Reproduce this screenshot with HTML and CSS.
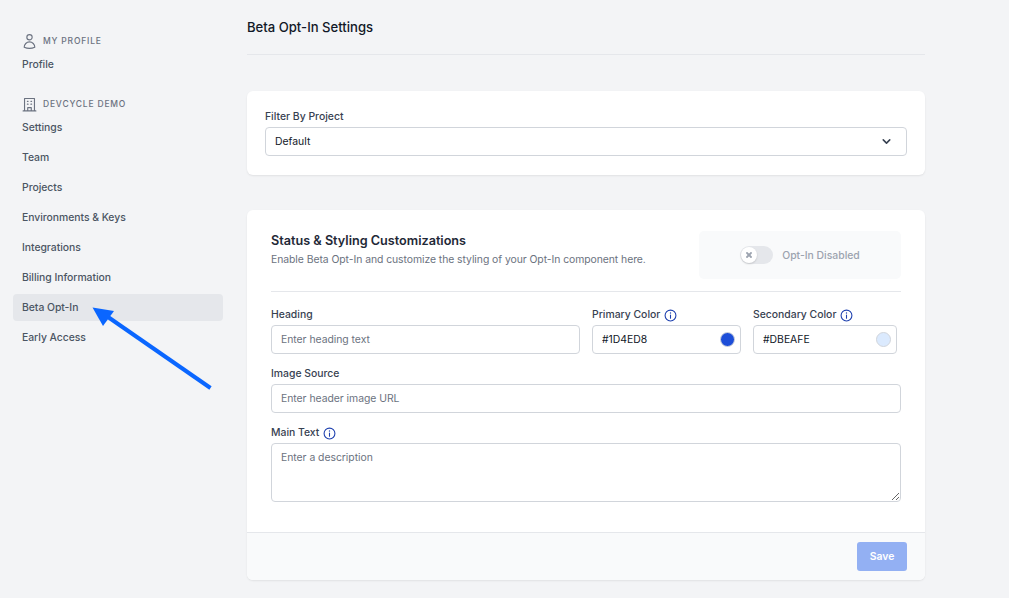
FILE: index.html
```html
<!DOCTYPE html>
<html>
  <head>
    <meta charset="UTF-8" />
    <title>Beta Opt-In Settings</title>
    <link rel="stylesheet" href="styles.css">
  </head>
  <body>
    <div class="page">
      <nav class="sidebar">
        <div class="nav-head">
          <svg class="nav-icon" viewBox="0 0 24 24" fill="none" stroke="#6b7280" stroke-width="1.6" stroke-linecap="round" stroke-linejoin="round"><path d="M15.75 6a3.75 3.75 0 1 1-7.5 0 3.75 3.75 0 0 1 7.5 0Z"/><path d="M4.5 20.1a7.5 7.5 0 0 1 15 0A17.9 17.9 0 0 1 12 21.75c-2.7 0-5.2-.6-7.5-1.65Z"/></svg>
          <span>MY PROFILE</span>
        </div>
        <a class="nav-item">Profile</a>
        <div class="nav-head nav-head-second">
          <svg class="nav-icon" viewBox="0 0 24 24" fill="none" stroke="#6b7280" stroke-width="1.6" stroke-linecap="round" stroke-linejoin="round"><path d="M3 21h18M5 21V3.500h14V21M9.500 21v-4.500h5V21M9 7.500h1M14 7.500h1M9 11.500h1M14 11.500h1"/></svg>
          <span>DEVCYCLE DEMO</span>
        </div>
        <div class="nav-list">
          <a class="nav-item">Settings</a>
          <a class="nav-item">Team</a>
          <a class="nav-item">Projects</a>
          <a class="nav-item">Environments &amp; Keys</a>
          <a class="nav-item">Integrations</a>
          <a class="nav-item">Billing Information</a>
          <a class="nav-item active">Beta Opt-In</a>
          <a class="nav-item">Early Access</a>
        </div>
      </nav>

      <main class="content">
        <h1 class="page-title">Beta Opt-In Settings</h1>

        <section class="card filter-card">
          <label class="field-label">Filter By Project</label>
          <div class="select-wrap">
            <select class="input select">
              <option>Default</option>
            </select>
            <svg class="chevron" viewBox="0 0 20 20" fill="none" stroke="#374151" stroke-width="2.4" stroke-linecap="round" stroke-linejoin="round"><path d="M5 7.500l5 5 5-5"/></svg>
          </div>
        </section>

        <section class="card status-card">
          <div class="card-body">
            <div class="status-head">
              <div>
                <h2 class="card-title">Status &amp; Styling Customizations</h2>
                <p class="card-sub">Enable Beta Opt-In and customize the styling of your Opt-In component here.</p>
              </div>
              <div class="toggle-box">
                <span class="toggle">
                  <span class="knob">
                    <svg viewBox="0 0 10 10" fill="none" stroke="#9ca3af" stroke-width="1.8" stroke-linecap="round"><path d="M3 3l4 4M7 3l-4 4"/></svg>
                  </span>
                </span>
                <span class="toggle-label">Opt-In Disabled</span>
              </div>
            </div>

            <div class="field-row">
              <div class="field">
                <label class="field-label">Heading</label>
                <input class="input" placeholder="Enter heading text">
              </div>
              <div class="field">
                <label class="field-label">Primary Color
                  <svg class="info" viewBox="0 0 24 24" fill="none" stroke="#1e40af" stroke-width="2" stroke-linecap="round"><circle cx="12" cy="12" r="10"/><path d="M12 11v6"/><path d="M12 7.200v.1" stroke-width="2.600"/></svg>
                </label>
                <div class="color-wrap">
                  <input class="input color-input" value="#1D4ED8">
                  <span class="dot dot-primary"></span>
                </div>
              </div>
              <div class="field">
                <label class="field-label">Secondary Color
                  <svg class="info" viewBox="0 0 24 24" fill="none" stroke="#1e40af" stroke-width="2" stroke-linecap="round"><circle cx="12" cy="12" r="10"/><path d="M12 11v6"/><path d="M12 7.200v.1" stroke-width="2.600"/></svg>
                </label>
                <div class="color-wrap">
                  <input class="input color-input" value="#DBEAFE">
                  <span class="dot dot-secondary"></span>
                </div>
              </div>
            </div>

            <div class="field field-block">
              <label class="field-label">Image Source</label>
              <input class="input" placeholder="Enter header image URL">
            </div>

            <div class="field field-block">
              <label class="field-label">Main Text
                <svg class="info" viewBox="0 0 24 24" fill="none" stroke="#1e40af" stroke-width="2" stroke-linecap="round"><circle cx="12" cy="12" r="10"/><path d="M12 11v6"/><path d="M12 7.200v.1" stroke-width="2.600"/></svg>
              </label>
              <textarea class="input textarea" placeholder="Enter a description"></textarea>
            </div>
          </div>

          <div class="card-footer">
            <button class="save-btn">Save</button>
          </div>
        </section>
      </main>
    </div>

    <!-- annotation drawn over the screenshot -->
    <svg class="arrow" viewBox="0 0 1009 598">
      <path d="M210.500 388L108 317" stroke="#0a66ff" stroke-width="4" fill="none"/>
      <path d="M92.500 307.500L114 311L103 326Z" fill="#0a66ff"/>
    </svg>
  </body>
</html>
```

FILE: styles.css
```css
* {
   box-sizing: border-box;
}
html, body {
   margin: 0;
   padding: 0;
}
body {
   font-family: Inter, "Liberation Sans", Arial, sans-serif;
   font-size: 10.4px;
   line-height: 14px;
   color: #374151;
   background-color: #f3f4f6;
   position: relative;
}
.page {
   display: flex;
   width: 1009px;
   height: 598px;
   overflow: hidden;
}

/* sidebar */
.sidebar {
   width: 247px;
   flex: none;
   padding: 34px 24px 0 13px;
}
.nav-head {
   display: flex;
   align-items: center;
   gap: 5px;
   height: 14px;
   margin: 0 0 3px 8px;
   font-size: 8.500px;
   font-weight: 500;
   letter-spacing: 0.8px;
   color: #6b7280;
}
.nav-head-second {
   margin-top: 19px;
}
.nav-icon {
   width: 17px;
   height: 17px;
   flex: none;
}
.nav-list {
   display: flex;
   flex-direction: column;
   gap: 3px;
}
.nav-item {
   display: flex;
   align-items: center;
   height: 27px;
   padding: 0 9px;
   border-radius: 4px;
   font-weight: 500;
   letter-spacing: -0.04px;
   color: #4b5563;
}
.nav-item.active {
   background-color: #e5e7eb;
}

/* main column */
.content {
   width: 678px;
   flex: none;
}
.page-title {
   margin: 0 0 36px;
   height: 55px;
   padding-top: 19px;
   font-size: 13.100px;
   line-height: 17px;
   font-weight: 500;
   color: #111827;
   border-bottom: 1px solid #e5e7eb;
}
.card {
   background-color: white;
   border-radius: 6px;
   box-shadow: 0 1px 2px rgba(0, 0, 0, 0.08);
}
.filter-card {
   height: 84px;
   padding: 19px 18px 0;
   margin-bottom: 35px;
}
.status-card {
   height: 370px;
   display: flex;
   flex-direction: column;
   overflow: hidden;
}
.card-body {
   flex: 1;
   padding: 21px 24px 0;
}
.status-head {
   display: flex;
   justify-content: space-between;
   align-items: flex-start;
   height: 61px;
   border-bottom: 1px solid #e5e7eb;
}
.card-title {
   margin: 0;
   padding-top: 1px;
   font-size: 12.650px;
   line-height: 17px;
   font-weight: 600;
   color: #1f2937;
}
.card-sub {
   margin: 4px 0 0;
   letter-spacing: -0.06px;
   color: #6b7280;
}
.toggle-box {
   display: flex;
   align-items: center;
   justify-content: center;
   gap: 9px;
   width: 202px;
   height: 48px;
   background-color: #f9fafb;
   border-radius: 5px;
}
.toggle {
   display: block;
   width: 33px;
   height: 18px;
   padding: 1px;
   border-radius: 9px;
   background-color: #e5e7eb;
}
.knob {
   display: flex;
   align-items: center;
   justify-content: center;
   width: 16px;
   height: 16px;
   border-radius: 50%;
   background-color: white;
   box-shadow: 0 1px 2px rgba(0, 0, 0, 0.15);
}
.knob svg {
   width: 10px;
   height: 10px;
}
.toggle-label {
   padding-top: 1px;
   font-weight: 500;
   color: #9ca3af;
}

/* form fields */
.field-label {
   display: flex;
   align-items: center;
   gap: 3.500px;
   height: 14px;
   margin-bottom: 3px;
   font-weight: 500;
   color: #374151;
}
.info {
   width: 13px;
   height: 13px;
   flex: none;
}
.field-row {
   display: grid;
   grid-template-columns: 309px 149px 144px;
   gap: 12px;
   margin-top: 16px;
}
.field {
   display: flex;
   flex-direction: column;
}
.field-block {
   margin-top: 13px;
}
.input {
   display: block;
   width: 100%;
   height: 29px;
   margin: 0;
   padding: 0 9px;
   font-family: inherit;
   font-size: 10.400px;
   color: #111827;
   background-color: white;
   border: 1px solid #d1d5db;
   border-radius: 4px;
   outline: none;
}
.input::placeholder {
   color: #6b7280;
   opacity: 1;
   letter-spacing: -0.03px;
}
.select {
   appearance: none;
   -webkit-appearance: none;
}
.select-wrap, .color-wrap {
   position: relative;
}
.chevron {
   position: absolute;
   right: 14px;
   top: 8px;
   width: 13px;
   height: 13px;
}
.dot {
   position: absolute;
   right: 6px;
   top: 7px;
   width: 15px;
   height: 15px;
   border-radius: 50%;
   border: 1px solid #d1d5db;
}
.dot-primary {
   background-color: #1d4ed8;
}
.dot-secondary {
   background-color: #dbeafe;
}
.textarea {
   height: 59px;
   padding: 7px 9px;
   line-height: 14px;
   resize: vertical;
}
.card-footer {
   display: flex;
   justify-content: flex-end;
   align-items: center;
   height: 48px;
   padding: 0 18px;
   background-color: #f9fafb;
   border-top: 1px solid #e5e7eb;
}
.save-btn {
   width: 50px;
   height: 29px;
   padding: 0;
   font-family: inherit;
   font-size: 10.400px;
   font-weight: 600;
   color: white;
   background-color: #93b0f3;
   border: none;
   border-radius: 3px;
}
.arrow {
   position: absolute;
   left: 0;
   top: 0;
   width: 1009px;
   height: 598px;
   pointer-events: none;
}
```
